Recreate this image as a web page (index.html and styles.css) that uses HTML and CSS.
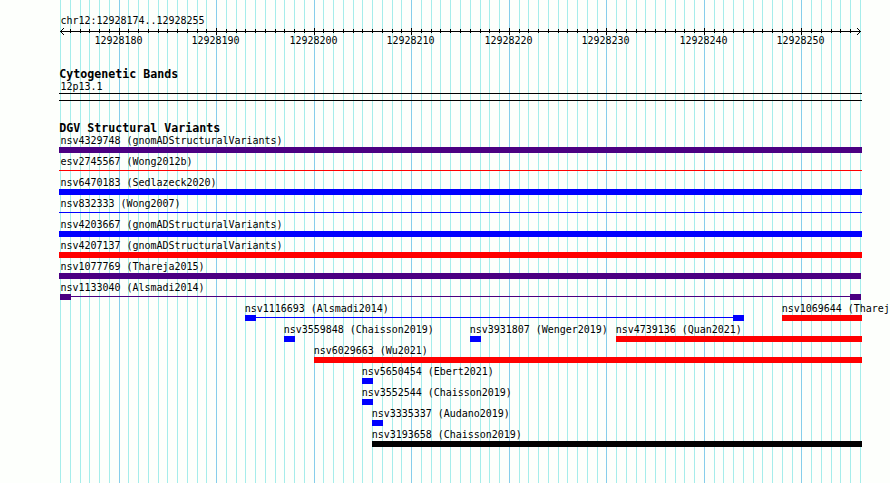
FILE: index.html
```html
<!DOCTYPE html>
<html lang="en">
<head>
<meta charset="utf-8">
<title>chr12:12928174..12928255</title>
<link rel="stylesheet" href="styles.css">
</head>
<body>
<main class="browser">
  <svg class="gridlines" width="890" height="483" aria-hidden="true">
    <path id="minor" class="minor"/>
    <path id="major" class="major"/>
  </svg>
  <header class="region">chr12:12928174..12928255</header>
  <svg class="ruler" id="ruler" width="890" height="22">
    <path class="axis" d="M60 5.5H861M61.5 4v3M62.5 3v1M62.5 7v1M63.5 2v1M63.5 8v1M859.5 4v3M858.5 3v1M858.5 7v1M857.5 2v1M857.5 8v1"/>
    <path id="ticks" class="ticks"/>
  </svg>
  <section class="bands">
    <h2>Cytogenetic Bands</h2>
    <p>12p13.1</p>
    <div class="band"></div>
  </section>
  <section class="variants">
    <h2>DGV Structural Variants</h2>
    <div id="rows"></div>
  </section>
</main>
<script src="tracks.js"></script>
</body>
</html>
```
FILE: styles.css
```css
* { box-sizing: border-box; }
body {
  margin: 0;
  background: #fdfffc;
  color: #000;
  font: 10px/12px "DejaVu Sans Mono", monospace;
  letter-spacing: -0.02px;
}
.browser {
  position: relative;
  width: 890px;
  height: 483px;
  overflow: hidden;
  padding-top: 15px;
}
.gridlines { position: absolute; left: 0; top: 0; z-index: -1; }
.minor { fill: #a5edeb; }
.major { fill: #86ceeb; }
.ticks { fill: #000; }
.axis { fill: none; stroke: #000; stroke-width: 1; shape-rendering: crispEdges; }
.region { height: 11px; padding-left: 60.6px; line-height: 12px; }
.ruler { display: block; overflow: visible; }
h2 {
  margin: -1px 0 1px 59.3px;
  height: 12px;
  font-size: 11.63px;
  line-height: 12px;
  font-weight: bold;
  letter-spacing: 0;
  white-space: nowrap;
}
p { margin: 0 0 0 60.6px; height: 12px; }
.bands { padding-top: 21px; }
.band {
  width: 803px;
  height: 8px;
  margin-left: 59px;
  border: solid #000;
  border-width: 1px 0;
}
.variants { padding-top: 22px; }
.row { display: flex; height: 21px; }
.feature { flex: none; width: var(--width); margin-left: var(--gap); color: var(--color); }
.label {
  display: block;
  height: 12px;
  margin-left: -0.3px;
  color: #000;
  white-space: nowrap;
}
.edge .label { margin-left: 1.6px; }
.inset .label { margin-left: 0.6px; }
.glyph { display: flex; justify-content: space-between; height: 6px; background: currentColor; }
.line .glyph, .span .glyph {
  background: linear-gradient(currentColor, currentColor) 0 2px / 100% 1px no-repeat;
}
.span .glyph::before, .span .glyph::after { content: ""; width: 11px; background: currentColor; }
```
FILE: tracks.js
```js
const colors = { purple: "#4b0082", red: "#ff0000", blue: "#0000ff", black: "#000000" };
const rows = [
  [["nsv4329748 (gnomADStructuralVariants)", 59, 862, "purple", "edge"]],
  [["esv2745567 (Wong2012b)", 59, 862, "red", "edge line"]],
  [["nsv6470183 (Sedlazeck2020)", 59, 862, "blue", "edge"]],
  [["nsv832333 (Wong2007)", 59, 862, "blue", "edge line"]],
  [["nsv4203667 (gnomADStructuralVariants)", 59, 862, "blue", "edge"]],
  [["nsv4207137 (gnomADStructuralVariants)", 59, 862, "red", "edge"]],
  [["nsv1077769 (Thareja2015)", 59, 861, "purple", "edge"]],
  [["nsv1133040 (Alsmadi2014)", 60, 861, "purple", "inset span"]],
  [["nsv1116693 (Alsmadi2014)", 245, 744, "blue", "span"], ["nsv1069644 (Thareja2015)", 782, 862, "red", ""]],
  [["nsv3559848 (Chaisson2019)", 284, 295, "blue", ""], ["nsv3931807 (Wenger2019)", 470, 481, "blue", ""], ["nsv4739136 (Quan2021)", 616, 862, "red", ""]],
  [["nsv6029663 (Wu2021)", 314, 862, "red", ""]],
  [["nsv5650454 (Ebert2021)", 362, 373, "blue", ""]],
  [["nsv3552544 (Chaisson2019)", 362, 373, "blue", ""]],
  [["nsv3335337 (Audano2019)", 372, 383, "blue", ""]],
  [["nsv3193658 (Chaisson2019)", 372, 862, "black", ""]]
];

const container = document.getElementById("rows");
for (const features of rows) {
  const row = document.createElement("div");
  row.className = "row";
  let cursor = 0;
  for (const [name, start, end, color, kind] of features) {
    const el = document.createElement("div");
    el.className = "feature " + kind;
    el.style.cssText = `--gap:${start - cursor}px;--width:${end - start}px;--color:${colors[color]}`;
    const label = document.createElement("span");
    label.className = "label";
    label.textContent = name;
    const glyph = document.createElement("div");
    glyph.className = "glyph";
    el.append(label, glyph);
    row.append(el);
    cursor = end;
  }
  container.append(row);
}

// One gridline per base, with a heavier one every ten bases.
let minor = "", major = "", ticks = "";
const ruler = document.getElementById("ruler");
for (let i = 0; i <= 82; i++) {
  const x = Math.round(60 + i * 800 / 82);
  const line = `M${x} 0h1v483h-1z`;
  if (i % 10 === 6) {
    major += line;
    ticks += `M${x} 2h1v7h-1z`;
    const text = document.createElementNS("http://www.w3.org/2000/svg", "text");
    text.setAttribute("x", x - 24.4);
    text.setAttribute("y", 18);
    text.textContent = 12928174 + i;
    ruler.append(text);
  } else {
    minor += line;
    if (i > 0 && i < 82) ticks += `M${x} 3h1v4h-1z`;
  }
}
document.getElementById("minor").setAttribute("d", minor);
document.getElementById("major").setAttribute("d", major);
document.getElementById("ticks").setAttribute("d", ticks);
```
